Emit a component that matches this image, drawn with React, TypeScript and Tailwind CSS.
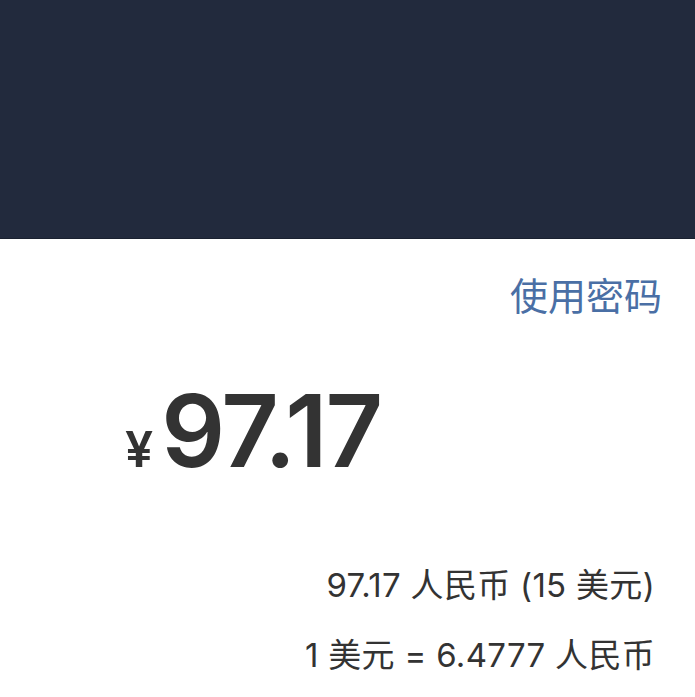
export default function App() {
  return (
    <div
      className="w-[695px] h-[697px] bg-white overflow-hidden"
      style={{ fontFamily: '"Inter", "Noto Sans CJK SC", sans-serif' }}
    >
      <div className="h-[239px] bg-[#222a3d] border-b border-[#1a2130]" />
      <div className="flex justify-end pr-[33px] pt-[34px]">
        <span className="text-[38px] leading-[46px] text-[#4a6fa5]">使用密码</span>
      </div>
      <div className="flex items-baseline pl-[125px] mt-[62px]">
        <span className="text-[50px] leading-none font-semibold text-[#333333] mr-[8px]">¥</span>
        <span className="text-[100px] leading-none font-semibold text-[#333333] tracking-[-2px]">97.17</span>
      </div>
      <div className="flex flex-col items-end pr-[40px] mt-[84px] gap-[30px] text-[#333333] text-[33px] leading-[40px] tracking-[0.3px]">
        <span>97.17 人民币 (15 美元)</span>
        <span>1 美元 = 6.4777 人民币</span>
      </div>
    </div>
  );
}
